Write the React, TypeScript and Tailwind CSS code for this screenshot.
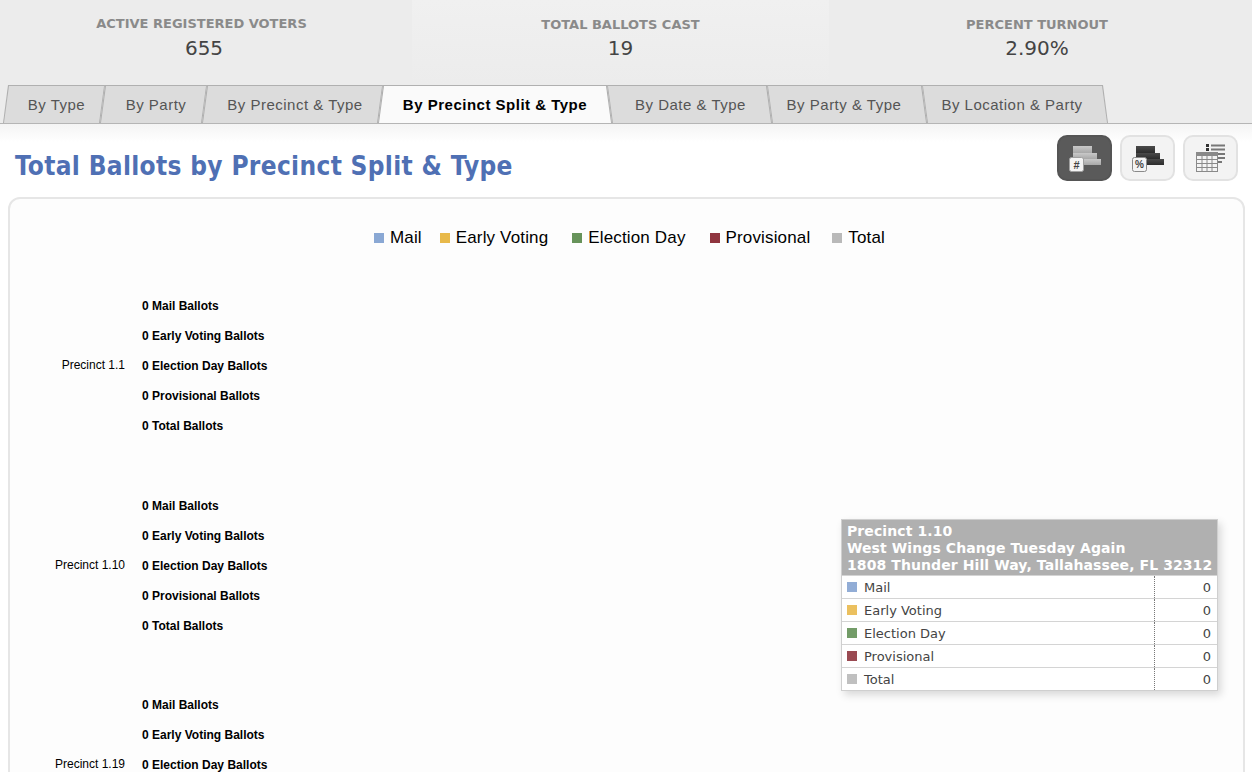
import React from 'react';

const stats = [
  { label: 'ACTIVE REGISTERED VOTERS', value: '655' },
  { label: 'TOTAL BALLOTS CAST', value: '19' },
  { label: 'PERCENT TURNOUT', value: '2.90%' },
];

const tabs = [
  { name: 'By Type', width: 'w-[102px]', side: 'before', pad: 'pl-[5px]' },
  { name: 'By Party', width: 'w-[107px]', side: 'before', pad: 'pl-[5px]' },
  { name: 'By Precinct & Type', width: 'w-[181px]', side: 'before', pad: 'pl-[5px]' },
  { name: 'By Precinct Split & Type', width: 'w-[234px]', side: 'active', pad: '' },
  { name: 'By Date & Type', width: 'w-[165px]', side: 'after', pad: 'pl-[2px]' },
  { name: 'By Party & Type', width: 'w-[160px]', side: 'after', pad: 'pr-[6px]' },
  { name: 'By Location & Party', width: 'w-[186px]', side: 'after', pad: 'pr-[6px]' },
];

const legend = [
  { name: 'Mail', color: 'bg-[#8aa8d4]', margin: 'ml-0' },
  { name: 'Early Voting', color: 'bg-[#e8b94a]', margin: 'ml-[18px]' },
  { name: 'Election Day', color: 'bg-[#67935a]', margin: 'ml-[24px]' },
  { name: 'Provisional', color: 'bg-[#8f353f]', margin: 'ml-[24px]' },
  { name: 'Total', color: 'bg-[#b9b9b9]', margin: 'ml-[22px]' },
];

const tooltipRows = [
  { name: 'Mail', color: 'bg-[#92add6]' },
  { name: 'Early Voting', color: 'bg-[#ebc05f]' },
  { name: 'Election Day', color: 'bg-[#739c68]' },
  { name: 'Provisional', color: 'bg-[#9a4a52]' },
  { name: 'Total', color: 'bg-[#c0c0c0]' },
];

const precincts = ['Precinct 1.1', 'Precinct 1.10', 'Precinct 1.19'];
const ballotTypes = ['Mail', 'Early Voting', 'Election Day', 'Provisional', 'Total'];

const Tab = ({ name, width, side, pad }: { name: string; width: string; side: string; pad: string }) => {
  const clip =
    side === 'before'
      ? '[clip-path:polygon(5px_0,100%_0,calc(100%-5px)_100%,0_100%)]'
      : side === 'after'
        ? '[clip-path:polygon(0_0,calc(100%-5px)_0,100%_100%,5px_100%)]'
        : '[clip-path:polygon(5px_0,calc(100%-5px)_0,100%_100%,0_100%)]';
  const active = side === 'active';
  return (
    <div className={`${width} h-[38px] -ml-[5px] first:ml-0 pt-px px-px bg-[#b0b0b0] ${clip}`}>
      <div
        className={`h-full flex items-center justify-center pt-[2px] text-[15px] tracking-[0.5px] ${clip} ${pad} ${
          active ? 'bg-[#fafafa] text-black font-bold' : 'bg-[#dcdcdc] text-[#555]'
        }`}
      >
        {name}
      </div>
    </div>
  );
};

const Stairs = ({ id, top, bottom }: { id: string; top: string; bottom: string }) => (
  <>
    <defs>
      <linearGradient id={id} x1="0" y1="0" x2="0" y2="1">
        <stop offset="0" stopColor={top} />
        <stop offset="1" stopColor={bottom} />
      </linearGradient>
    </defs>
    <rect x="4" y="0" width="19" height="7" fill={`url(#${id})`} />
    <rect x="4" y="7" width="24" height="6" fill={`url(#${id})`} />
    <rect x="15" y="13" width="17" height="6" fill={`url(#${id})`} />
  </>
);

const CountIcon = () => (
  <svg width="32" height="26" viewBox="0 0 32 26">
    <Stairs id="count" top="#c9c9c9" bottom="#a8a8a8" />
    <rect x="0.5" y="11.5" width="14" height="14" rx="2" fill="#f4f4f4" stroke="#a0a0a0" />
    <text x="7.5" y="22.5" fontSize="11" fontWeight="700" textAnchor="middle" fill="#444" fontFamily="Liberation Sans">
      #
    </text>
  </svg>
);

const PercentIcon = () => (
  <svg width="32" height="26" viewBox="0 0 32 26">
    <Stairs id="percent" top="#4a4a4a" bottom="#2c2c2c" />
    <rect x="0.5" y="11.5" width="14" height="14" rx="2" fill="#f4f4f4" stroke="#8a8a8a" />
    <text x="7.5" y="22" fontSize="10" fontWeight="700" textAnchor="middle" fill="#444" fontFamily="Liberation Sans">
      %
    </text>
  </svg>
);

const TableIcon = () => (
  <svg width="30" height="28" viewBox="0 0 30 28">
    <rect x="10" y="0" width="3" height="3" fill="#333" />
    <rect x="10" y="4" width="3" height="3" fill="#333" />
    <path d="M15 1.5h14M15 5.5h14M22 10h7M22 14h7M22 18h4" stroke="#777" strokeWidth="2" />
    <rect x="0.5" y="8.5" width="21" height="19" fill="#f4f4f4" stroke="#8a8a8a" />
    <rect x="0" y="8" width="22" height="4" fill="#8a8a8a" />
    <path d="M0 15.5h22M0 19.5h22M0 23.5h22M6 12v16M11 12v16M16 12v16" stroke="#8a8a8a" />
  </svg>
);

const PrecinctGroup = ({ name }: { name: string }) => (
  <div className="h-[199.67px] flex items-center text-[12px] leading-[30px] text-black">
    <div className="w-[115px] text-right -mt-[2px]">{name}</div>
    <div className="ml-[17px] font-bold">
      {ballotTypes.map((type) => (
        <div key={type}>0 {type} Ballots</div>
      ))}
    </div>
  </div>
);

export default function App() {
  return (
    <div className="relative h-[772px] overflow-hidden bg-white font-['Liberation_Sans',Arial,sans-serif]">
      <div className="bg-[#ececec] border-b border-[#b5b5b5] h-[124px]">
        <div className="grid grid-cols-[412px_417px_416px] h-[85px]">
          {stats.map((stat, i) => (
            <div
              key={stat.label}
              className={`text-center pt-[16px] ${i === 0 ? 'pr-[4px]' : ''} ${i === 1 ? 'bg-gradient-to-b from-[#f0f0f0] to-[#ececec]' : ''}`}
            >
              <div
                className={`text-[13px] leading-[16px] font-bold text-[#8a8a8a] font-['DejaVu_Sans',sans-serif] ${
                  i === 0 ? 'mr-[5px]' : 'mt-px -mb-px'
                }`}
              >
                {stat.label}
              </div>
              <div className="mt-[3px] text-[20px] leading-[26px] text-[#444] font-['DejaVu_Sans',sans-serif]">
                {stat.value}
              </div>
            </div>
          ))}
        </div>
        <div className="flex pl-[3px]">
          {tabs.map((tab) => (
            <Tab key={tab.name} {...tab} />
          ))}
        </div>
      </div>

      <div className="bg-[linear-gradient(#f4f4f4,#ffffff_18px)] px-[8px]">
        <div className="flex items-start justify-between h-[73px]">
          <h1 className="mt-[25px] ml-[7px] text-[26px] tracking-[0.33px] leading-[34px] font-bold text-[#4f70b4] font-['DejaVu_Sans',sans-serif] [font-stretch:condensed]">
            Total Ballots by Precinct Split &amp; Type
          </h1>
          <div className="flex gap-[8px] mt-[11px] mr-[6px]">
            <button className="w-[55px] h-[46px] pt-[2px] rounded-[10px] bg-[#5a5a5a] border-2 border-[#555] flex items-center justify-center">
              <CountIcon />
            </button>
            <button className="w-[55px] h-[46px] pt-[2px] rounded-[10px] bg-[#f3f3f3] border-2 border-[#e2e2e2] flex items-center justify-center">
              <PercentIcon />
            </button>
            <button className="w-[55px] h-[46px] rounded-[10px] bg-[#f3f3f3] border-2 border-[#e2e2e2] flex items-center justify-center">
              <TableIcon />
            </button>
          </div>
        </div>

        <div className="mr-[-1px] h-[600px] bg-[#fdfdfd] border-2 border-[#e6e6e6] rounded-[12px]">
          <div className="flex justify-center items-center h-[78px] text-[17px] tracking-[0.15px] text-black pl-[6px]">
            {legend.map((item) => (
              <div key={item.name} className={`flex items-center ${item.margin}`}>
                <span className={`w-[10px] h-[10px] mr-[6px] ${item.color}`} />
                {item.name}
              </div>
            ))}
          </div>
          <div className="mt-[-10.8px]">
            {precincts.map((name) => (
              <PrecinctGroup key={name} name={name} />
            ))}
          </div>
        </div>
      </div>

      <div className="absolute left-[841px] top-[519px] w-[377px] border border-[#cfcfcf] bg-white shadow-[3px_4px_8px_rgba(0,0,0,0.15)] font-['DejaVu_Sans',sans-serif]">
        <div className="bg-[#b0b0b0] pl-[5px] pt-[3px] pb-[1px] text-white font-bold text-[14px] tracking-[0.09px] leading-[17px] whitespace-nowrap">
          <div>Precinct 1.10</div>
          <div>West Wings Change Tuesday Again</div>
          <div>1808 Thunder Hill Way, Tallahassee, FL 32312</div>
        </div>
        {tooltipRows.map((row) => (
          <div key={row.name} className="flex h-[23px] border-t border-[#d4d4d4] text-[13px] text-[#444]">
            <div className="w-[313px] flex items-center pl-[5px] border-r border-dotted border-[#777]">
              <span className={`w-[10px] h-[10px] mr-[7px] ${row.color}`} />
              <span className="mt-[2px]">{row.name}</span>
            </div>
            <div className="flex-1 flex items-center justify-end pt-[2px] pr-[6px]">0</div>
          </div>
        ))}
      </div>
    </div>
  );
}
